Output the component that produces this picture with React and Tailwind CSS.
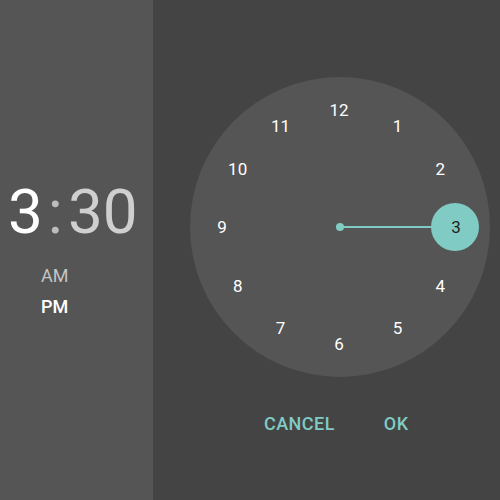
const NUMS = [12, 1, 2, 3, 4, 5, 6, 7, 8, 9, 10, 11];

function ClockFace() {
  const size = 300;
  const c = size / 2;
  const r = 117;
  return (
    <div className="relative w-[300px] h-[300px] rounded-full bg-[#555555]">
      {/* hand */}
      <div className="absolute left-[146px] top-[146px] w-2 h-2 rounded-full bg-[#80cbc4]" />
      <div className="absolute left-[150px] top-[149px] w-[95px] h-[2px] bg-[#80cbc4]" />
      <div className="absolute left-[241px] top-[126px] w-[48px] h-[48px] rounded-full bg-[#80cbc4]" />
      {NUMS.map((n, i) => {
        const a = (i * Math.PI) / 6;
        const x = c + r * Math.sin(a);
        const y = c - r * Math.cos(a);
        return (
          <span
            key={n}
            className={`absolute -translate-x-1/2 -translate-y-1/2 text-[17px] leading-none ${
              n === 3 ? "text-[#1f1f1f]" : "text-white"
            }`}
            style={{ left: x - 1, top: y }}
          >
            {n}
          </span>
        );
      })}
    </div>
  );
}

export default function App() {
  return (
    <div className="flex w-[500px] h-[500px] font-['Roboto',sans-serif] overflow-hidden">
      {/* Left time panel */}
      <div className="w-[153px] h-full bg-[#555555] flex flex-col pt-[181px] pl-[8px]">
        <div className="flex items-baseline text-[62px] leading-none">
          <span className="text-white">3</span>
          <span className="text-[#bdbdbd] mx-[5px]">:</span>
          <span className="text-[#cfcfcf]">30</span>
        </div>
        <div className="pl-[33px] mt-[22px] flex flex-col gap-[9px] text-[18px] leading-[22px]">
          <span className="text-[#c4c4c4]">AM</span>
          <span className="text-white font-medium">PM</span>
        </div>
      </div>

      {/* Right clock panel */}
      <div className="flex-1 h-full bg-[#444444] flex flex-col items-start pl-[37px] pt-[77px]">
        <ClockFace />
        <div className="flex gap-[49px] mt-[33px] ml-[74px] text-[18px] font-medium text-[#80cbc4] tracking-wide">
          <span>CANCEL</span>
          <span>OK</span>
        </div>
      </div>
    </div>
  );
}
